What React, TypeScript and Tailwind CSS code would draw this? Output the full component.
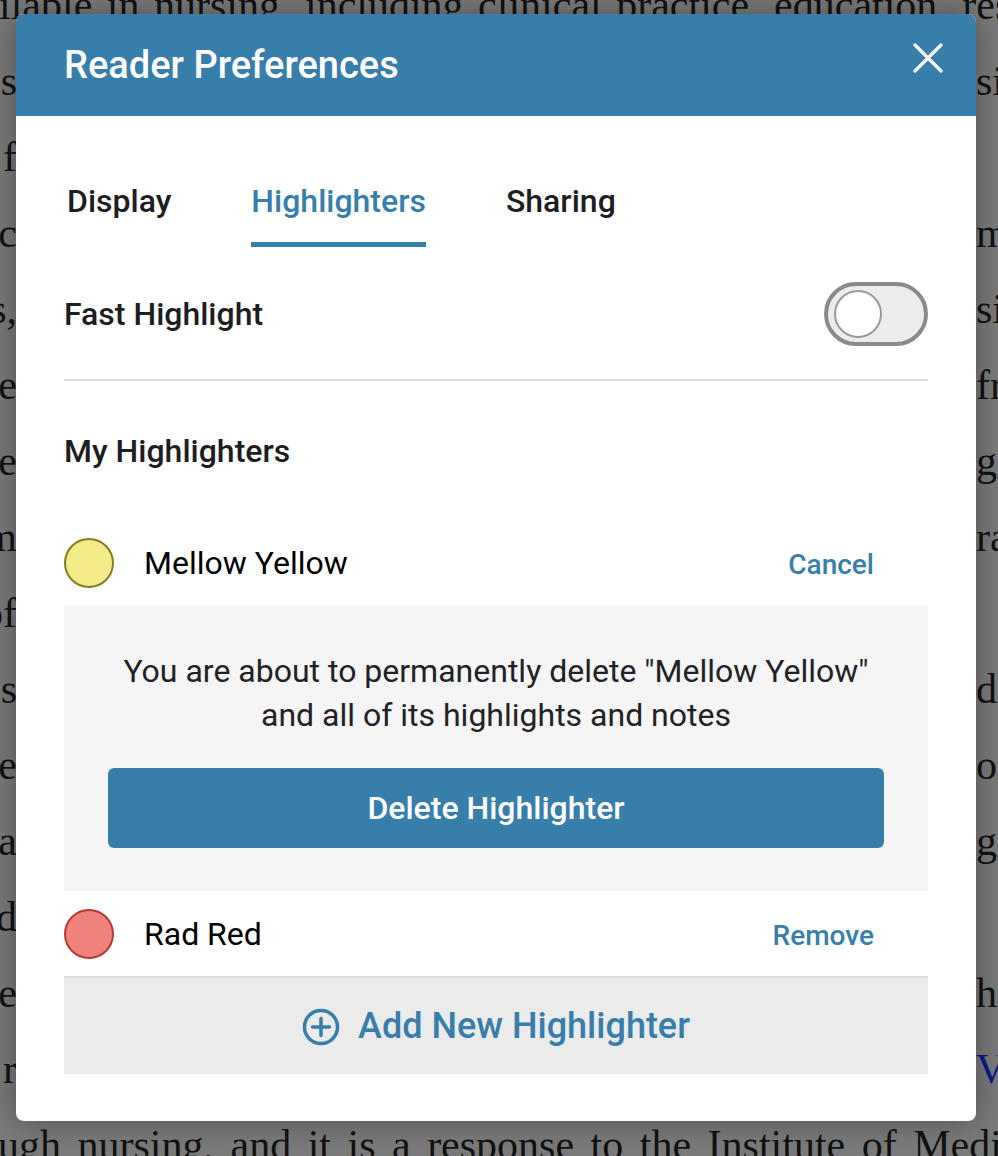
import React from "react";

const BLUE = "#377eab";

const leftFrags = ["is", "f", "c", "s,", "re", "e", "m", "of", " s", "re", "pa", "d", "e", "r"];
const rightFrags = ["si", "", "m", "s", "fr", "g", "ra", "", "d", "o", "ge", "", "h", "V"];

function Background() {
  return (
    <div className="absolute inset-0 overflow-hidden bg-[#7a7a7a] text-[#121212] [font-family:'Liberation_Serif','DejaVu_Serif',serif] text-[42px]">
      <div className="flex flex-col -mt-[33px]">
        <div className="h-[76px] leading-[76px] whitespace-nowrap -ml-[1px] [word-spacing:4px]">
          ilable in nursing, including clinical practice, education, research
        </div>
        {leftFrags.map((l, i) => (
          <div key={i} className="h-[76px] leading-[76px] flex justify-between whitespace-nowrap">
            <div className="w-[17px] flex justify-end">
              <span>{"word " + l}</span>
            </div>
            <div className="w-[22px] flex justify-start">
              {rightFrags[i] ? (
                <span className={i === 13 ? "text-[#0a1a8a]" : ""}>{rightFrags[i] + "ing text"}</span>
              ) : null}
            </div>
          </div>
        ))}
        <div className="h-[76px] leading-[76px] whitespace-nowrap -ml-[2px] [word-spacing:6px]">
          ugh nursing, and it is a response to the Institute of Medicine
        </div>
      </div>
    </div>
  );
}

function Circle({ fill, border }: { fill: string; border: string }) {
  return (
    <div
      className="w-[50px] h-[50px] rounded-full border-2 shrink-0"
      style={{ backgroundColor: fill, borderColor: border }}
    />
  );
}

export default function App() {
  return (
    <div className="relative w-[998px] h-[1156px] overflow-hidden [font-family:Roboto,'Noto_Sans',sans-serif]">
      <Background />
      <div className="absolute left-[16px] top-[14px] w-[960px] h-[1107px] bg-white rounded-[8px] overflow-hidden shadow-[0_0_30px_rgba(0,0,0,0.35)] flex flex-col">
        {/* Header */}
        <div className="h-[102px] shrink-0 flex items-center justify-between pl-[48px] pr-[32px]" style={{ backgroundColor: BLUE }}>
          <div className="text-white text-[38px] font-medium leading-[44px]">Reader Preferences</div>
          <svg width="32" height="32" viewBox="0 0 32 32" className="-mt-[14px]">
            <path d="M3 3 L29 29 M29 3 L3 29" stroke="white" strokeWidth="3.2" strokeLinecap="round" />
          </svg>
        </div>

        {/* Body */}
        <div className="px-[48px] flex flex-col">
          {/* Tabs */}
          <div className="flex gap-[80px] pt-[66px] pl-[3px]">
            <div className="flex flex-col">
              <div className="text-[32px] leading-[38px] font-medium text-[#1d1d22]">Display</div>
              <div className="h-[5px] mt-[22px]" />
            </div>
            <div className="flex flex-col">
              <div className="text-[32px] leading-[38px] font-medium" style={{ color: BLUE }}>Highlighters</div>
              <div className="h-[5px] mt-[22px]" style={{ backgroundColor: BLUE }} />
            </div>
            <div className="flex flex-col">
              <div className="text-[32px] leading-[38px] font-medium text-[#1d1d22]">Sharing</div>
              <div className="h-[5px] mt-[22px]" />
            </div>
          </div>

          {/* Fast Highlight */}
          <div className="h-[134px] flex items-center justify-between border-b-2 border-[#dddddd]">
            <div className="text-[32px] leading-[38px] font-medium text-[#1d1d22] mt-[2px]">Fast Highlight</div>
            <div className="w-[104px] h-[64px] rounded-full border-[4px] border-[#8a8a8a] bg-[#ececec] flex items-center pl-[6px] mt-[2px]">
              <div className="w-[48px] h-[48px] rounded-full bg-white border-2 border-[#9a9a9a]" />
            </div>
          </div>

          {/* My Highlighters */}
          <div className="pt-[51px] text-[32px] leading-[38px] font-medium text-[#1d1d22]">My Highlighters</div>

          {/* Mellow Yellow row */}
          <div className="mt-[50px] h-[86px] flex items-center pr-[54px]">
            <Circle fill="#f4ec89" border="#857b22" />
            <div className="ml-[30px] text-[32px] leading-[38px] text-black flex-1">Mellow Yellow</div>
            <div className="text-[28px] leading-[34px] font-medium mt-[4px]" style={{ color: BLUE }}>Cancel</div>
          </div>

          {/* Confirm box */}
          <div className="bg-[#f5f5f5] px-[44px] pt-[43px] pb-[43px] flex flex-col items-center">
            <div className="text-[32px] leading-[44px] text-[#222226] text-center whitespace-nowrap">
              You are about to permanently delete "Mellow Yellow"
              <br />
              and all of its highlights and notes
            </div>
            <button
              className="mt-[31px] w-full h-[80px] rounded-[6px] text-white text-[32px] font-medium flex items-center justify-center"
              style={{ backgroundColor: BLUE }}
            >
              Delete Highlighter
            </button>
          </div>

          {/* Rad Red row */}
          <div className="h-[87px] flex items-center pr-[54px] border-b-2 border-[#dddddd]">
            <Circle fill="#f0827e" border="#b53a33" />
            <div className="ml-[30px] text-[32px] leading-[38px] text-black flex-1">Rad Red</div>
            <div className="text-[28px] leading-[34px] font-medium mt-[4px]" style={{ color: BLUE }}>Remove</div>
          </div>

          {/* Add New Highlighter */}
          <div className="h-[96px] bg-[#ebebeb] flex items-center justify-center gap-[18px]">
            <svg width="38" height="38" viewBox="0 0 38 38" className="mt-[1px]">
              <circle cx="19" cy="19" r="16.5" fill="none" stroke={BLUE} strokeWidth="3.5" />
              <path d="M19 10.5 V27.5 M10.5 19 H27.5" stroke={BLUE} strokeWidth="3.5" strokeLinecap="round" />
            </svg>
            <div className="text-[36px] leading-[42px] font-medium" style={{ color: BLUE }}>Add New Highlighter</div>
          </div>
        </div>
      </div>
    </div>
  );
}
